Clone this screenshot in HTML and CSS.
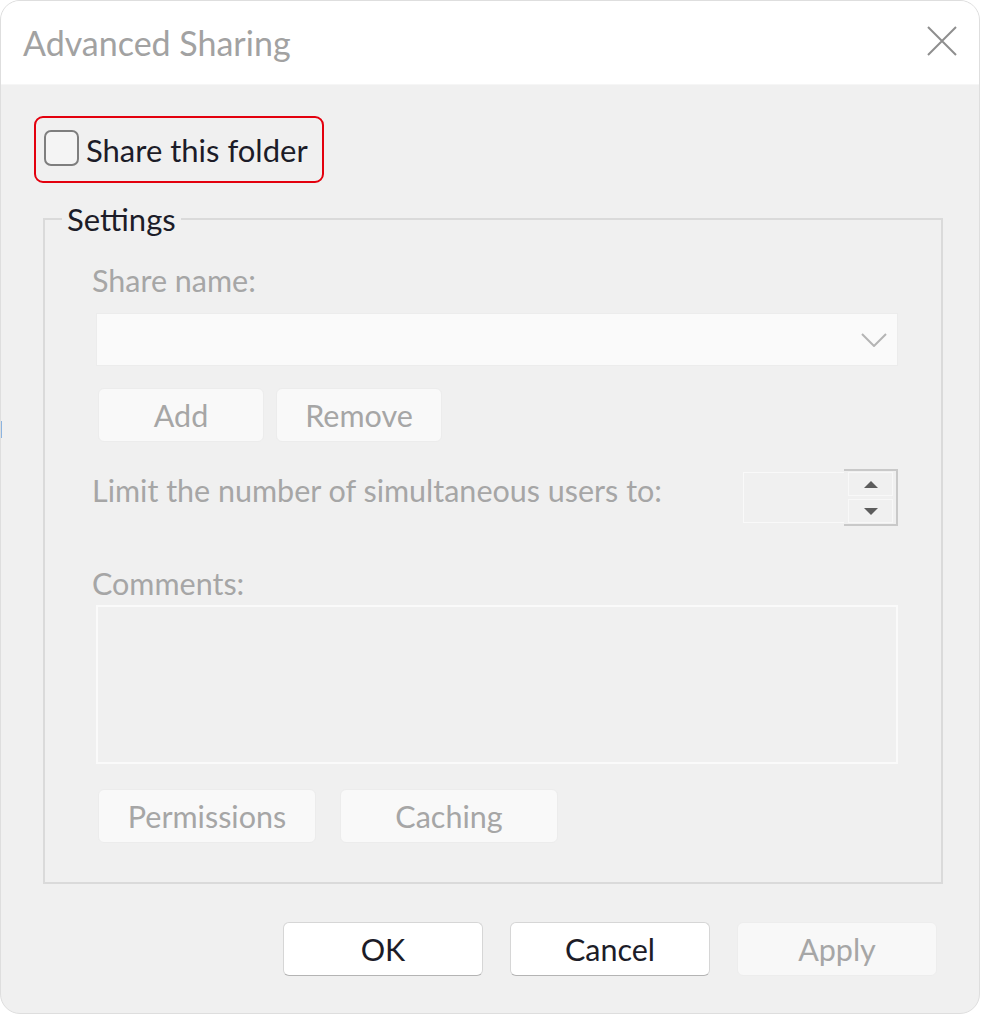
FILE: index.html
```html
<!DOCTYPE html>
<html lang="en-US">
<head>
	<meta charset="UTF-8" />
	<title>Advanced Sharing</title>
	<link rel="stylesheet" href="styles.css">
</head>
<body>
	<div class="window">
		<div class="titlebar">
			<span class="title">Advanced Sharing</span>
			<svg class="close" width="30" height="30" viewBox="0 0 30 30">
				<path d="M1 1 L29 29 M29 1 L1 29" stroke="#8e8e8e" stroke-width="2" fill="none" />
			</svg>
		</div>

		<div class="content">
			<label class="highlight">
				<span class="checkbox"></span>
				<span>Share this folder</span>
			</label>

			<fieldset class="settings">
				<legend>Settings</legend>

				<div class="label">Share name:</div>
				<div class="combo">
					<svg width="26" height="14" viewBox="0 0 26 14">
						<path d="M1 1 L13 13 L25 1" stroke="#b4b4b4" stroke-width="2" fill="none" />
					</svg>
				</div>

				<div class="row first-buttons">
					<div class="button">Add</div>
					<div class="button">Remove</div>
				</div>

				<div class="limit">
					<div class="label limit-text">Limit the number of simultaneous users to:</div>
					<div class="spinner">
						<div class="spin-field"></div>
						<div class="spin-buttons">
							<div class="spin-up"><span class="tri-up"></span></div>
							<div class="spin-down"><span class="tri-down"></span></div>
						</div>
					</div>
				</div>

				<div class="label comments-label">Comments:</div>
				<div class="comments"></div>

				<div class="row last-buttons">
					<div class="button wide">Permissions</div>
					<div class="button wide">Caching</div>
				</div>
			</fieldset>

			<div class="actions">
				<div class="action default">OK</div>
				<div class="action default">Cancel</div>
				<div class="action disabled">Apply</div>
			</div>
		</div>
		<span class="edge-mark"></span>
	</div>
</body>
</html>
```

FILE: styles.css
```css
body {
	margin: 0;
	background-color: white;
	font-family: Lato, "Open Sans", sans-serif;
	font-size: 30.5px;
	line-height: 36px;
}

.window {
	position: relative;
	width: 978px;
	height: 1012px;
	border: 1px solid #dedede;
	border-radius: 20px;
	background-color: #f0f0f0;
	overflow: hidden;
	display: flex;
	flex-direction: column;
}

.titlebar {
	height: 83px;
	flex: none;
	background-color: white;
	border-bottom: 1px solid #f6f6f6;
	display: flex;
	align-items: center;
	justify-content: space-between;
	padding: 0 22px 0 22px;
}

.title {
	font-size: 34px;
	color: #a2a2a2;
}

.close {
	margin-top: -4px;
}

.content {
	padding: 31px 36px 0 33px;
}

.highlight {
	width: 278px;
	height: 63px;
	border: 2px solid #e3000e;
	border-radius: 9px;
	display: flex;
	align-items: center;
	gap: 7px;
	padding-left: 8px;
	color: #1c1c28;
	font-size: 31px;
}

.checkbox {
	width: 31px;
	height: 32px;
	border: 2px solid #7e7e7e;
	border-radius: 7px;
	background-color: #f4f4f4;
	margin-top: -3px;
}

.settings {
	margin: 18px 0 0 9px;
	border: 2px solid #dadada;
	padding: 25px 43px 39px 51px;
}

.settings legend {
	padding: 0 5px;
	margin-left: -34px;
	color: #1c1c28;
	font-size: 31px;
}

.label {
	color: #a6a6a6;
	margin-left: -4px;
}

.combo {
	margin-top: 15px;
	height: 51px;
	background-color: #fafafa;
	border: 1px solid #ececec;
	display: flex;
	align-items: center;
	justify-content: flex-end;
	padding-right: 10px;
}

.row {
	display: flex;
	gap: 12px;
	margin-left: 2px;
}

.first-buttons {
	margin-top: 22px;
}

.button {
	width: 164px;
	height: 52px;
	background-color: #f9f9f9;
	border: 1px solid #ececec;
	border-radius: 6px;
	color: #a6a6a6;
	display: flex;
	align-items: center;
	justify-content: center;
}

.button.wide {
	width: 216px;
}

.last-buttons {
	margin-top: 25px;
	gap: 24px;
}

.limit {
	margin-top: 27px;
	display: flex;
	justify-content: space-between;
	align-items: flex-start;
}

.limit-text {
	margin-top: 3px;
}

.spinner {
	display: flex;
	align-items: center;
}

.spin-field {
	width: 100px;
	height: 49px;
	border: 1px solid #f9f9f9;
	border-right: none;
}

.spin-buttons {
	width: 45px;
	height: 53px;
	border: 2px solid #c9c9c9;
	border-left: none;
	display: flex;
	flex-direction: column;
	justify-content: center;
	gap: 3px;
	padding: 0 3px 0 4px;
}

.spin-up,
.spin-down {
	height: 22px;
	border: 1px solid #f8f8f8;
	display: flex;
	align-items: center;
	justify-content: center;
}

.tri-up {
	border-left: 7px solid transparent;
	border-right: 7px solid transparent;
	border-bottom: 7px solid #5c5c5c;
}

.tri-down {
	border-left: 7px solid transparent;
	border-right: 7px solid transparent;
	border-top: 7px solid #5c5c5c;
}

.comments-label {
	margin-top: 39px;
}

.comments {
	margin-top: 4px;
	height: 155px;
	border: 2px solid #fafafa;
}

.actions {
	margin-top: 38px;
	padding-right: 6px;
	display: flex;
	justify-content: flex-end;
	gap: 27px;
}

.action {
	width: 198px;
	height: 52px;
	border-radius: 6px;
	display: flex;
	align-items: center;
	justify-content: center;
}

.action.default {
	background-color: white;
	border: 1px solid #d6d6d6;
	border-bottom-color: #b4b4b4;
	color: #1c1c28;
}

.action.disabled {
	background-color: #f8f8f8;
	border: 1px solid #ededed;
	color: #a6a6a6;
}

.edge-mark {
	position: absolute;
	left: -1px;
	top: 420px;
	width: 2px;
	height: 17px;
	background-color: #8cb4e0;
}
```
